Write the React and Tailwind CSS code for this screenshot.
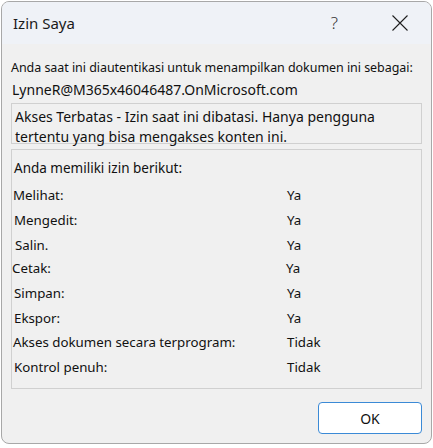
const rows = [
  { label: 'Melihat:', value: 'Ya', h: 'h-[25px]', pl: 'pl-0' },
  { label: 'Mengedit:', value: 'Ya', h: 'h-[25px]', pl: 'pl-[1px]' },
  { label: 'Salin.', value: 'Ya', h: 'h-[25px]', pl: 'pl-[2px]' },
  { label: 'Cetak:', value: 'Ya', h: 'h-[22px]', pl: 'pl-0 -ml-[1px]' },
  { label: 'Simpan:', value: 'Ya', h: 'h-[27px]', pl: 'pl-[1px]' },
  { label: 'Ekspor:', value: 'Ya', h: 'h-[23px]', pl: 'pl-[1px]' },
  { label: 'Akses dokumen secara terprogram:', value: 'Tidak', h: 'h-[25px]', pl: 'pl-0' },
  { label: 'Kontrol penuh:', value: 'Tidak', h: 'h-[25px]', pl: 'pl-[1px]' },
]

function CloseIcon() {
  return (
    <svg width="16" height="16" viewBox="0 0 16 16" className="mr-[23px]">
      <path d="M0.5 0.5 L15.5 15.5 M15.5 0.5 L0.5 15.5" stroke="#1f1f1f" strokeWidth="1.1" fill="none" />
    </svg>
  )
}

export default function App() {
  return (
    <div className="w-[433px] h-[448px] bg-white pt-[1px] pl-[1px]" style={{ fontFamily: '"Noto Sans", "Open Sans", sans-serif' }}>
      {/* dialog window */}
      <div className="w-[431px] h-[443px] border border-[#a8a8a8] rounded-[8px] overflow-hidden bg-[#f0f0f0] flex flex-col">
        <header className="h-[42px] shrink-0 bg-[#eff2f7] flex items-center pl-[11px] text-[#1a1a1a]">
          <span className="text-[15px] leading-none">Izin Saya</span>
          <span className="ml-auto mr-[54px] text-[17px] font-light text-[#333]">?</span>
          <CloseIcon />
        </header>

        <div className="px-[9px] text-[#111]">
          <p className="mt-[14px] h-[20px] leading-[20px] text-[12.5px] tracking-[-0.05px]">
            Anda saat ini diautentikasi untuk menampilkan dokumen ini sebagai:
          </p>
          <p className="mt-[1px] h-[22px] leading-[22px] text-[14px] pl-[1px]">
            LynneR@M365x46046487.OnMicrosoft.com
          </p>

          <div className="mt-[2px] h-[41px] border border-[#d0d0d0] pl-[3px] pt-[3px] text-[14px] leading-[20px]">
            Akses Terbatas - Izin saat ini dibatasi. Hanya pengguna
            <br />
            tertentu yang bisa mengakses konten ini.
          </div>

          <div className="mt-[5px] h-[240px] border border-[#d0d0d0] pl-[1px] pt-[8px]">
            <p className="h-[20px] leading-[20px] text-[13.5px] pl-[1px]">Anda memiliki izin berikut:</p>
            <div className="mt-[5px]">
              {rows.map((r) => (
                <div key={r.label} className={`flex items-center text-[13.3px] ${r.h}`}>
                  <span className={`w-[274px] ${r.pl}`}>{r.label}</span>
                  <span>{r.value}</span>
                </div>
              ))}
            </div>
          </div>

          <div className="mt-[13px] flex justify-end">
            <button className="w-[104px] h-[32px] bg-white border border-[#3b8ad6] rounded-[4px] text-[14px] text-[#111]">
              OK
            </button>
          </div>
        </div>
      </div>
    </div>
  )
}
